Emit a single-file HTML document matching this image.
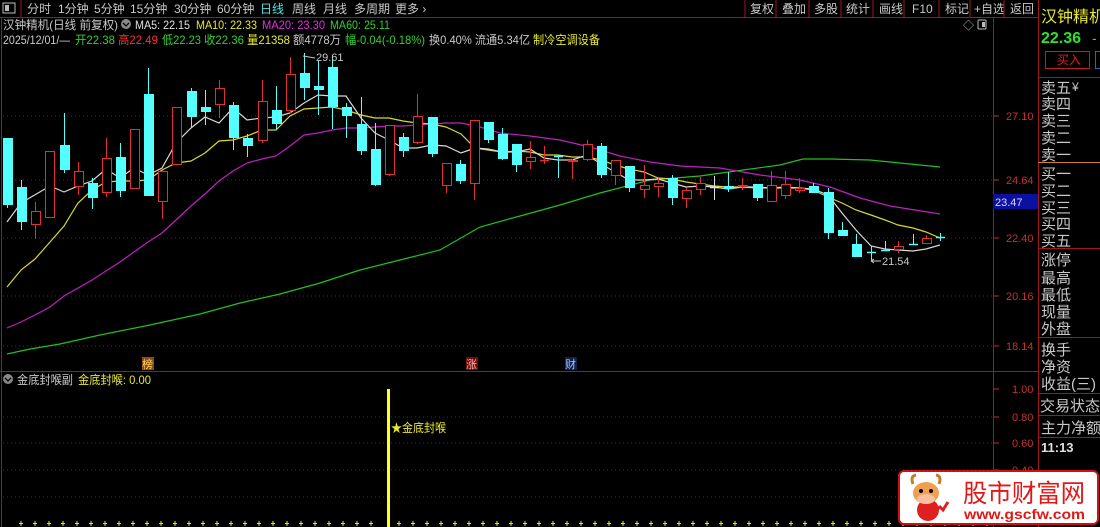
<!DOCTYPE html>
<html><head><meta charset="utf-8"><style>
html,body{margin:0;padding:0;background:#000;width:1100px;height:527px;overflow:hidden}
svg{display:block}
text{font-family:"Liberation Sans","Noto Sans CJK SC",sans-serif}
</style></head><body>
<svg id="s" width="1100" height="527" viewBox="0 0 1100 527" xmlns="http://www.w3.org/2000/svg">
<rect width="1100" height="527" fill="#000"/>
<!-- toolbar -->
<rect x="3" y="3" width="12" height="10" fill="none" stroke="#bbb"/><rect x="5" y="5" width="4" height="6" fill="#bbb"/>
<line x1="21" y1="0" x2="21" y2="17" stroke="#a01818"/>
<g font-size="12" fill="#c8c8c8">
<text x="27" y="13">分时</text><text x="58" y="13">1分钟</text><text x="94" y="13">5分钟</text><text x="130" y="13">15分钟</text><text x="174" y="13">30分钟</text><text x="217" y="13">60分钟</text>
<text x="260" y="13" fill="#4ee6e6">日线</text><text x="292" y="13">周线</text><text x="323" y="13">月线</text><text x="354" y="13">多周期</text><text x="395" y="13">更多 ›</text>
<text x="750" y="13">复权</text><text x="782" y="13">叠加</text><text x="814" y="13">多股</text><text x="846" y="13">统计</text><text x="879" y="13">画线</text><text x="912" y="13">F10</text><text x="945" y="13">标记</text><text x="974" y="13">+自选</text><text x="1010" y="13">返回</text>
</g>
<g stroke="#a01818">
<line x1="745" y1="0" x2="745" y2="17"/><line x1="776" y1="0" x2="776" y2="17"/><line x1="809" y1="0" x2="809" y2="17"/><line x1="841" y1="0" x2="841" y2="17"/><line x1="873" y1="0" x2="873" y2="17"/><line x1="904" y1="0" x2="904" y2="17"/><line x1="939" y1="0" x2="939" y2="17"/><line x1="970" y1="0" x2="970" y2="17"/><line x1="1004" y1="0" x2="1004" y2="17"/>
<line x1="0" y1="17.5" x2="1038" y2="17.5"/>
<line x1="1038.5" y1="0" x2="1038.5" y2="527"/>
<line x1="993.5" y1="17" x2="993.5" y2="527"/>
<line x1="1.5" y1="17" x2="1.5" y2="527"/>
<line x1="0" y1="371.5" x2="1038" y2="371.5"/>
</g>
<!-- header -->
<g font-size="12" lengthAdjust="spacingAndGlyphs">
<text x="3" y="29" fill="#c8c8c8" textLength="115" lengthAdjust="spacingAndGlyphs">汉钟精机(日线 前复权)</text>
<circle cx="126" cy="24" r="5" fill="#888"/><path d="M123 23 l3 3 l3 -3" stroke="#000" fill="none" stroke-width="1.3"/>
<text x="135" y="29" fill="#e0e0e0" textLength="55" lengthAdjust="spacingAndGlyphs">MA5: 22.15</text>
<text x="196" y="29" fill="#e8e830" textLength="61" lengthAdjust="spacingAndGlyphs">MA10: 22.33</text>
<text x="262" y="29" fill="#e030e0" textLength="63" lengthAdjust="spacingAndGlyphs">MA20: 23.30</text>
<text x="330" y="29" fill="#30d030" textLength="60" lengthAdjust="spacingAndGlyphs">MA60: 25.11</text>
<text x="3" y="44" fill="#c8c8c8" textLength="67" lengthAdjust="spacingAndGlyphs">2025/12/01/—</text>
<text x="75" y="44" fill="#30d030" textLength="40" lengthAdjust="spacingAndGlyphs">开22.38</text>
<text x="118" y="44" fill="#ff3030" textLength="40" lengthAdjust="spacingAndGlyphs">高22.49</text>
<text x="162" y="44" fill="#30d030" textLength="39" lengthAdjust="spacingAndGlyphs">低22.23</text>
<text x="204" y="44" fill="#30d030" textLength="40" lengthAdjust="spacingAndGlyphs">收22.36</text>
<text x="247" y="44" fill="#e8e830" textLength="43" lengthAdjust="spacingAndGlyphs">量21358</text>
<text x="293" y="44" fill="#c8c8c8" textLength="48" lengthAdjust="spacingAndGlyphs">额4778万</text>
<text x="345" y="44" fill="#30d030" textLength="80" lengthAdjust="spacingAndGlyphs">幅-0.04(-0.18%)</text>
<text x="429" y="44" fill="#c8c8c8" textLength="101" lengthAdjust="spacingAndGlyphs">换0.40% 流通5.34亿</text>
<text x="533" y="44" fill="#e8e830" textLength="67" lengthAdjust="spacingAndGlyphs">制冷空调设备</text>
<text x="963" y="29" fill="#bbb" font-size="11">◇</text>
<rect x="978" y="20" width="8" height="9" rx="1" fill="none" stroke="#bbb"/><rect x="982" y="22" width="3" height="5" fill="#bbb"/>
</g>
<!-- grid -->
<g stroke="#7a1a1a" stroke-dasharray="1,3">
<line x1="3" y1="116" x2="993" y2="116"/><line x1="3" y1="180" x2="993" y2="180"/><line x1="3" y1="238" x2="993" y2="238"/><line x1="3" y1="296" x2="993" y2="296"/><line x1="3" y1="346" x2="993" y2="346"/>
<line x1="3" y1="417" x2="993" y2="417"/><line x1="3" y1="443" x2="993" y2="443"/><line x1="3" y1="470" x2="993" y2="470"/><line x1="3" y1="497" x2="993" y2="497"/>
</g>
<g stroke="#c03030"><line x1="994" y1="116" x2="999" y2="116"/><line x1="994" y1="180" x2="999" y2="180"/><line x1="994" y1="238" x2="999" y2="238"/><line x1="994" y1="296" x2="999" y2="296"/><line x1="994" y1="346" x2="999" y2="346"/><line x1="994" y1="389" x2="999" y2="389"/><line x1="994" y1="417" x2="999" y2="417"/><line x1="994" y1="443" x2="999" y2="443"/><line x1="994" y1="470" x2="999" y2="470"/></g>
<g font-size="11" fill="#c83030">
<text x="1006" y="120">27.10</text><text x="1006" y="184">24.64</text><text x="1006" y="242">22.40</text><text x="1006" y="300">20.16</text><text x="1006" y="350">18.14</text>
<text x="1012" y="393">1.00</text><text x="1012" y="421">0.80</text><text x="1012" y="447">0.60</text><text x="1012" y="474">0.40</text>
</g>
<rect x="993" y="194" width="45" height="15" fill="#0a10a0"/><text x="995" y="206" font-size="11" fill="#d8d8ff">23.47</text>
<!-- MA lines -->
<g fill="none" stroke-width="1.2">
<polyline stroke="#20c020" points="7,354 30,349 60,344 100,335 150,325 200,314 240,303 280,294 320,283 360,270 400,260 440,250 480,227 520,216 560,205 600,193 650,180 700,176 743,170 780,165 803,159 830,159 870,160 900,163 940,167"/>
<polyline stroke="#c020c0" points="7,328 21,322 35,315 50,307 64,296 78,288 92,280 106,271 120,262 134,252 148,242 162,233 176,220 191,206 205,194 219,181 233,171 247,163 262,159 276,156 290,146 304,135 318,133 332,130 346,128 361,128 375,127 389,126 403,126 417,125 432,124 446,123 461,123 480,127 500,133 530,136 560,140 590,147 620,156 650,162 680,166 720,168 760,175 800,180 830,187 860,198 890,206 915,210 940,214"/>
<polyline stroke="#d8d830" points="7,287 21,270 35,259 50,242 64,226 78,203 92,190 106,182 120,181 134,181 148,180 162,170 176,163 191,161 205,153 219,141 233,140 247,136 262,130 276,130 290,116 304,109 318,108 332,107 346,110 361,115 375,118 389,118 403,121 417,123 432,124 446,127 461,134 475,148 488,150 502,152 516,151 530,152 544,155 558,155 572,157 587,157 601,160 615,165 629,169 644,172 658,178 672,179 686,182 700,184 714,186 728,187 742,187 757,188 771,188 785,188 799,188 813,190 828,197 842,203 856,210 871,215 885,220 898,225 913,228 926,232 940,238"/>
<polyline stroke="#d8d8d8" points="7,222 21,203 50,186 64,192 78,186 92,181 106,169 120,178 134,168 148,175 162,168 176,143 191,128 205,117 219,123 233,108 247,120 262,118 276,117 290,113 304,103 318,95 332,96 346,96 361,118 375,133 389,140 403,148 417,148 432,145 446,146 461,153 475,148 488,149 502,152 516,152 530,149 544,158 558,160 572,160 587,155 601,164 615,172 629,180 644,180 658,179 672,183 686,187 700,186 714,187 728,189 742,187 757,187 771,188 785,187 799,188 813,189 828,195 842,213 856,230 871,246 885,249 898,250 913,251 926,249 940,245"/>
</g>
<g id="candles"></g>
<text x="316" y="61" font-size="11" fill="#c8c8c8">29.61</text><path d="M303 56 L315 58" stroke="#c8c8c8"/>
<text x="882" y="265" font-size="11" fill="#c8c8c8">21.54</text><path d="M871 261 L881 261 M871 261 l3 -2 M871 261 l3 2" stroke="#c8c8c8"/>
<rect x="142" y="357" width="12" height="13" fill="#8a4a10"/><text x="142" y="368" font-size="11" fill="#ffd070">榜</text>
<rect x="466" y="357" width="12" height="13" fill="#700c0c"/><text x="466" y="368" font-size="11" fill="#ffb0b0">涨</text>
<rect x="565" y="357" width="12" height="13" fill="#102050"/><text x="565" y="368" font-size="11" fill="#a0c0ff">财</text>
<!-- lower panel -->
<circle cx="8" cy="379" r="5" fill="#888"/><path d="M5 378 l3 3 l3 -3" stroke="#000" fill="none" stroke-width="1.3"/>
<text x="17" y="384" font-size="12" fill="#c8c8c8" textLength="56" lengthAdjust="spacingAndGlyphs">金底封喉副</text>
<text x="78" y="384" font-size="12" fill="#e8e830" textLength="73" lengthAdjust="spacingAndGlyphs">金底封喉: 0.00</text>
<rect x="387" y="389" width="3" height="138" fill="#ffff20"/>
<text x="391" y="432" font-size="12" fill="#e8e830" textLength="55" lengthAdjust="spacingAndGlyphs">★金底封喉</text>
<g id="ticks" stroke="#e8e830"></g>
<!-- right panel -->
<text x="1041" y="22" font-size="16" fill="#e8e830">汉钟精机</text>
<text x="1041" y="43" font-size="16" font-weight="bold" fill="#30e030">22.36</text>
<text x="1092" y="43" font-size="14" fill="#30e030">-</text>
<rect x="1045.5" y="51.5" width="44" height="17" fill="none" stroke="#c02020"/>
<text x="1057" y="64" font-size="12" fill="#e02020">买入</text>
<rect x="1095.5" y="51.5" width="8" height="17" fill="none" stroke="#3060c0"/>
<line x1="1038" y1="77.5" x2="1100" y2="77.5" stroke="#a01818"/>
<line x1="1038" y1="162.5" x2="1100" y2="162.5" stroke="#d08020"/>
<line x1="1038" y1="248.5" x2="1100" y2="248.5" stroke="#a01818"/>
<line x1="1038" y1="337.5" x2="1100" y2="337.5" stroke="#a01818"/>
<line x1="1038" y1="393.5" x2="1100" y2="393.5" stroke="#a01818"/>
<line x1="1038" y1="415.5" x2="1100" y2="415.5" stroke="#a01818"/>
<line x1="1038" y1="437.5" x2="1100" y2="437.5" stroke="#a01818"/>
<g font-size="15" fill="#c8c8c8">
<text x="1041" y="93">卖五</text><text x="1072" y="91" font-size="12">¥</text><text x="1041" y="109">卖四</text><text x="1041" y="126">卖三</text><text x="1041" y="143">卖二</text><text x="1041" y="160">卖一</text>
<text x="1041" y="179">买一</text><text x="1041" y="196">买二</text><text x="1041" y="213">买三</text><text x="1041" y="229">买四</text><text x="1041" y="246">买五</text>
<text x="1041" y="265">涨停</text><text x="1041" y="283">最高</text><text x="1041" y="300">最低</text><text x="1041" y="317">现量</text><text x="1041" y="334">外盘</text>
<text x="1041" y="355">换手</text><text x="1041" y="372">净资</text><text x="1041" y="389">收益(三)</text>
<text x="1040" y="411">交易状态</text><text x="1041" y="433">主力净额</text>
<text x="1041" y="452" font-size="13" font-weight="bold" fill="#e0e0e0">11:13</text>
</g>
<!-- logo -->
<rect x="899" y="471" width="199" height="53" rx="5" fill="#fff" stroke="#d01010" stroke-width="2"/>
<circle cx="928" cy="510" r="11" fill="#e02020"/>
<ellipse cx="926" cy="493" rx="13" ry="11" fill="#f0a050"/>
<ellipse cx="926" cy="499" rx="9" ry="5" fill="#f8c0a0"/>
<circle cx="921" cy="491" r="2" fill="#000"/><circle cx="931" cy="491" r="2" fill="#000"/>
<path d="M913 484 q-3 -8 3 -9 M939 484 q3 -8 -3 -9" stroke="#c08030" stroke-width="3" fill="none"/>
<path d="M930 515 l10 -8 l3 3 l5 -8" stroke="#e02020" stroke-width="3" fill="none"/>
<text x="963" y="502" font-size="25" fill="#e01818" textLength="122" lengthAdjust="spacingAndGlyphs">股市财富网</text>
<text x="964" y="519" font-size="14" font-weight="bold" fill="#e01818" textLength="121" lengthAdjust="spacingAndGlyphs">www.gscfw.com</text>
</svg>
<script>
var d=[[7,138,205,138,208,'c'],[21,187,222,180,230,'c'],[35,211,225,202,239,'r'],[49,151,218,151,218,'r'],[64,145,170,113,173,'c'],[78,171,187,162,195,'r'],[92,183,198,178,209,'c'],[106,158,193,138,197,'r'],[120,157,191,143,197,'c'],[134,129,189,129,189,'r'],[148,94,196,68,196,'c'],[162,171,202,170,219,'r'],[176,107,165,107,165,'r'],[191,91,117,88,127,'c'],[205,107,112,90,125,'c'],[219,88,105,80,118,'r'],[233,105,138,102,150,'c'],[247,138,146,134,157,'c'],[262,101,141,80,143,'r'],[276,110,124,86,130,'c'],[290,74,111,57,113,'r'],[304,73,88,53,100,'c'],[318,86,90,61,115,'c'],[332,67,107,55,129,'c'],[346,107,116,103,138,'c'],[361,124,151,97,155,'c'],[375,149,185,123,186,'c'],[389,125,175,125,176,'r'],[403,137,151,133,157,'c'],[417,116,143,94,144,'r'],[432,117,154,117,157,'c'],[446,163,186,163,193,'r'],[460,164,181,160,184,'c'],[474,120,184,120,200,'r'],[488,122,140,122,143,'c'],[502,134,159,128,160,'c'],[516,144,165,144,172,'c'],[530,157,162,141,169,'r'],[544,160,161,146,164,'r'],[558,156,157,155,178,'c'],[572,160,162,159,179,'r'],[587,144,160,140,161,'r'],[601,146,175,143,178,'c'],[615,160,176,160,185,'r'],[629,166,188,166,192,'c'],[644,185,190,165,198,'r'],[658,183,187,178,197,'r'],[672,178,198,175,205,'c'],[686,190,199,188,208,'r'],[700,183,190,177,195,'r'],[714,187,187,176,200,'w'],[728,186,189,172,192,'c'],[742,185,187,178,190,'r'],[757,184,198,184,201,'c'],[771,185,202,171,202,'r'],[785,184,196,171,199,'r'],[799,188,191,178,193,'r'],[813,186,193,183,193,'c'],[828,192,233,188,239,'c'],[842,230,236,222,236,'c'],[856,244,257,234,257,'c'],[871,252,252,246,260,'c'],[885,250,250,241,250,'c'],[898,246,250,241,253,'r'],[913,244,244,234,244,'c'],[926,238,244,235,244,'r'],[940,237,237,233,241,'c']];
var g=document.getElementById('candles'),h='';
d.forEach(function(c){var col=c[5]=='c'?'#54ffff':(c[5]=='r'?'#e03030':'#e0e0e0');var x=c[0],t=c[1],b=c[2];
h+='<line x1="'+(x+.5)+'" y1="'+c[3]+'" x2="'+(x+.5)+'" y2="'+c[4]+'" stroke="'+col+'"/>';
if(b-t<2){h+='<line x1="'+(x-4)+'" y1="'+(t+.5)+'" x2="'+(x+5)+'" y2="'+(t+.5)+'" stroke="'+col+'" stroke-width="1.5"/>';}
else if(c[5]=='c'){h+='<rect x="'+(x-4)+'" y="'+t+'" width="10" height="'+(b-t)+'" fill="'+col+'"/>';}
else{h+='<rect x="'+(x-3.5)+'" y="'+(t+.5)+'" width="9" height="'+(b-t-1)+'" fill="#000" stroke="'+col+'"/>';}});
g.innerHTML=h;
var k='';for(var x=21;x<990;x+=14){if(Math.abs(x-388)<4)continue;k+='<line x1="'+x+'" y1="521" x2="'+x+'" y2="526"/><line x1="'+(x-2)+'" y1="523.5" x2="'+(x+2)+'" y2="523.5"/>';}
document.getElementById('ticks').innerHTML=k;
</script>
</body></html>
